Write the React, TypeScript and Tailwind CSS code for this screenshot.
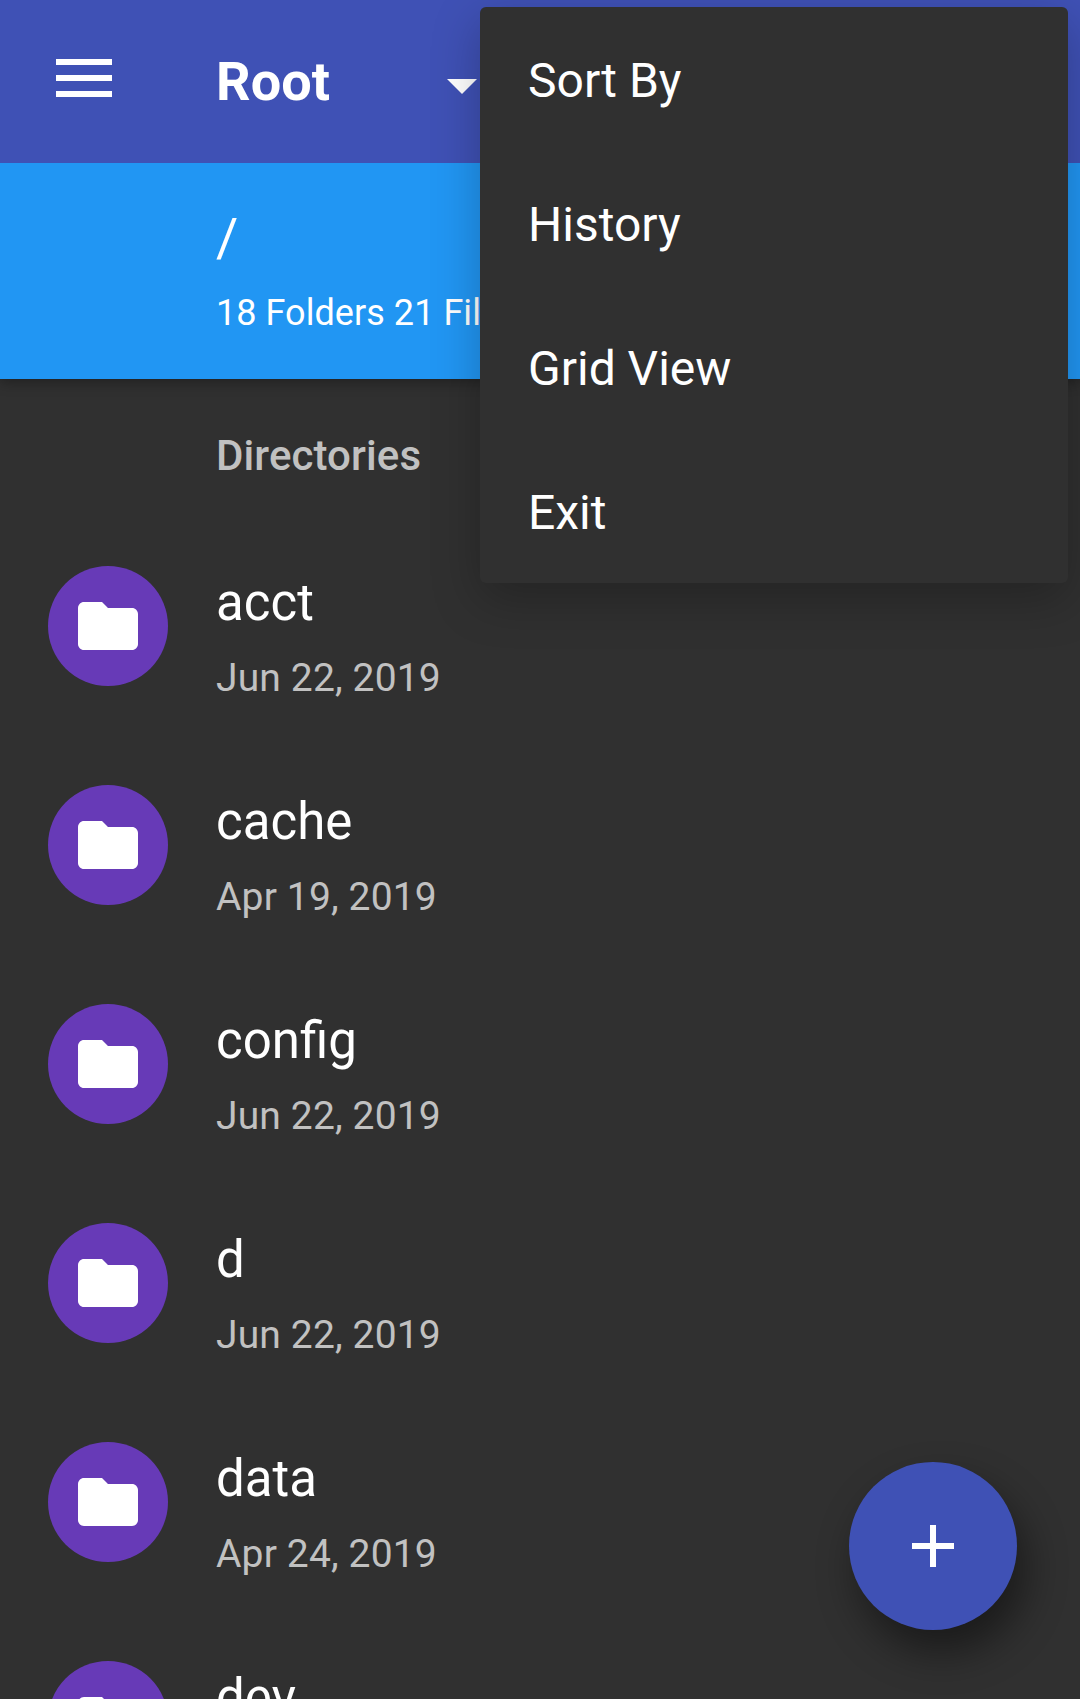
const entries = [
  { name: "acct", date: "Jun 22, 2019" },
  { name: "cache", date: "Apr 19, 2019" },
  { name: "config", date: "Jun 22, 2019" },
  { name: "d", date: "Jun 22, 2019" },
  { name: "data", date: "Apr 24, 2019" },
  { name: "dev", date: "Jun 22, 2019" },
];

const menuItems = ["Sort By", "History", "Grid View", "Exit"];

function FolderIcon() {
  return (
    <svg viewBox="0 0 24 24" className="size-[72px] fill-white">
      <path d="M10 4H4c-1.1 0-1.99.9-1.99 2L2 18c0 1.1.9 2 2 2h16c1.1 0 2-.9 2-2V8c0-1.1-.9-2-2-2h-8l-2-2z" />
    </svg>
  );
}

function Row({ name, date }: { name: string; date: string }) {
  return (
    <li className="flex h-[219px] shrink-0 pl-12">
      <div className="mt-[48px] flex size-[120px] shrink-0 items-center justify-center rounded-full bg-[#673ab7]">
        <FolderIcon />
      </div>
      <div className="ml-12 flex flex-col pt-[55px]">
        <span className="text-[51px] leading-[60px] text-white">{name}</span>
        <span className="mt-[22px] text-[39px] leading-[46px] tracking-[0.15px] text-[#c1c1c1]">{date}</span>
      </div>
    </li>
  );
}

export default function App() {
  return (
    <div className="relative flex h-[1699px] w-[1080px] flex-col overflow-hidden bg-[#303030] font-['Roboto',sans-serif] text-white">
      <header className="z-20 flex h-[163px] shrink-0 bg-[#3f51b5]">
        <button aria-label="Open drawer" className="ml-12 mt-[42px] flex size-[72px] items-center justify-center">
          <svg viewBox="0 0 56 38" className="h-[38px] w-[56px] shrink-0 fill-white">
            <path d="M0 0h56v6H0zM0 16h56v6H0zM0 32h56v6H0z" />
          </svg>
        </button>
        <h1 className="ml-24 mt-[50px] w-[231px] text-[54px] leading-[64px] font-bold tracking-[0.1px]">Root</h1>
        <svg viewBox="0 0 30 15" className="mt-[79px] h-[15px] w-[30px] fill-white">
          <path d="M0 0h30L15 15z" />
        </svg>
      </header>
      <section className="z-10 flex h-[216px] shrink-0 flex-col bg-[#2196f3] pl-[216px] pt-[43px] shadow-[0_4px_12px_rgba(0,0,0,0.3)]">
        <span className="text-[54px] leading-[64px]">/</span>
        <span className="mt-[22px] text-[36px] leading-[42px] tracking-[0.05px]">18 Folders 21 Files</span>
      </section>
      <h2 className="h-[139px] shrink-0 pl-[216px] pt-[52px] text-[42px] leading-[50px] font-medium tracking-[0.1px] text-[#c1c1c1]">
        Directories
      </h2>
      <ul className="flex flex-col">
        {entries.map((entry) => (
          <Row key={entry.name} {...entry} />
        ))}
      </ul>
      <nav className="absolute top-[7px] left-[480px] z-30 flex h-[576px] w-[588px] flex-col rounded-[6px] bg-[#303030] shadow-[0_16px_48px_rgba(0,0,0,0.25)]">
        {menuItems.map((item) => (
          <button key={item} className="flex h-36 items-center pt-1 pl-12 text-left text-[48px] leading-[56px]">
            {item}
          </button>
        ))}
      </nav>
      <button
        aria-label="Add"
        className="absolute top-[1462px] left-[849px] z-10 flex size-[168px] items-center justify-center rounded-full bg-[#3f51b5] shadow-[9px_22px_40px_rgba(0,0,0,0.45)]"
      >
        <svg viewBox="0 0 24 24" className="size-[72px] fill-white">
          <path d="M19 13h-6v6h-2v-6H5v-2h6V5h2v6h6v2z" />
        </svg>
      </button>
    </div>
  );
}
